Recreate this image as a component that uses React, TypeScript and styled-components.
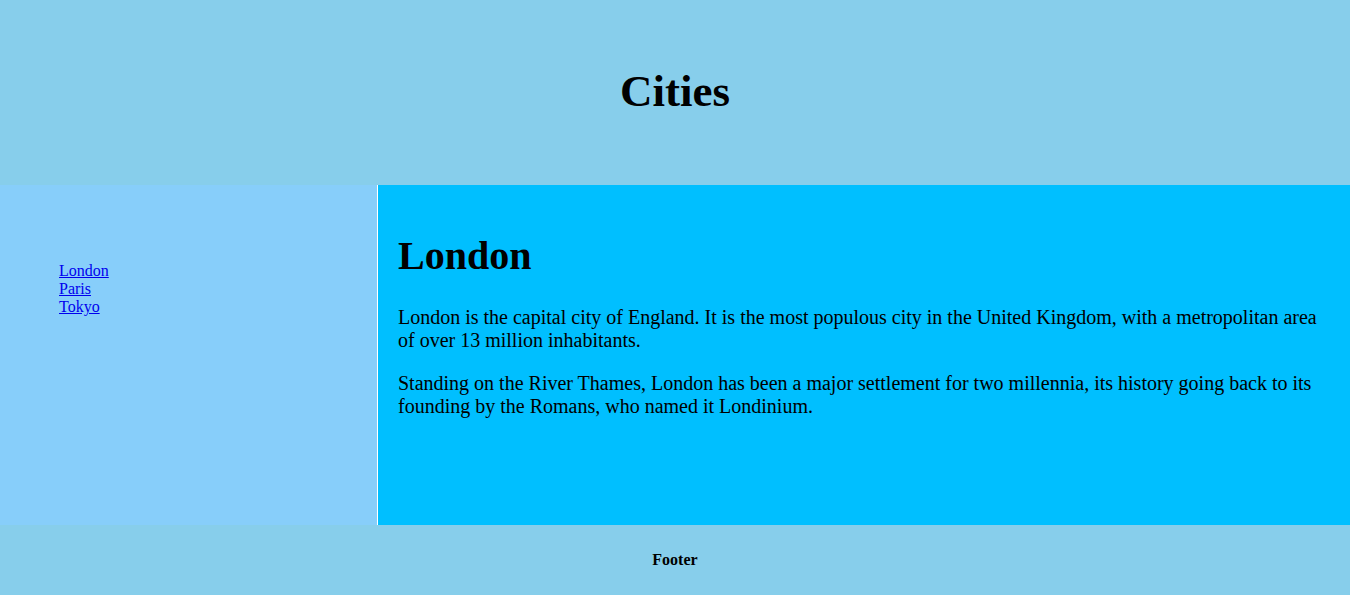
import React from "react";
import styled, { createGlobalStyle } from "styled-components";

const GlobalStyle = createGlobalStyle`
  html, body {
    margin: 0;
    padding: 0;
    background: #ffffff;
    font-family: "Liberation Serif", "Times New Roman", serif;
  }
  * { box-sizing: border-box; }
`;

const Page = styled.div`
  display: flex;
  flex-direction: column;
  width: 100%;
  height: 595px;
`;

const Header = styled.header`
  height: 185px;
  padding: 65px 0 0;
  background: #87ceeb;
  text-align: center;
`;

const Title = styled.h1`
  margin: 0;
  font-size: 45px;
  font-weight: bold;
  color: #000;
`;

const Section = styled.section`
  display: flex;
  gap: 1px;
  height: 340px;
`;

const Nav = styled.nav`
  flex: 0 0 377px;
  padding: 20px;
  background: #87cefa;
`;

const NavList = styled.ul`
  margin: 57px 0 0;
  padding-left: 39px;
  list-style: none;
  font-size: 16px;
`;

const NavLink = styled.a`
  color: #0000ee;
  text-decoration: underline;
`;

const Article = styled.article`
  flex: 1;
  padding: 20px;
  background: #00bfff;
  font-size: 20px;
  color: #000;
`;

const ArticleTitle = styled.h1`
  margin: 0.67em 0;
  font-size: 2em;
  font-weight: bold;
`;

const Paragraph = styled.p`
  margin: 1em 0;
`;

const Footer = styled.footer`
  height: 70px;
  padding: 10px;
  background: #87ceeb;
  text-align: center;
`;

const FooterText = styled.p`
  margin: 16px 0;
  font-size: 16px;
  font-weight: bold;
`;

const cities = ["London", "Paris", "Tokyo"];

export default function App() {
  return (
    <>
      <GlobalStyle />
      <Page>
        <Header>
          <Title>Cities</Title>
        </Header>
        <Section>
          <Nav>
            <NavList>
              {cities.map((c) => (
                <li key={c}>
                  <NavLink href="#">{c}</NavLink>
                </li>
              ))}
            </NavList>
          </Nav>
          <Article>
            <ArticleTitle>London</ArticleTitle>
            <Paragraph>
              London is the capital city of England. It is the most populous city in the United Kingdom, with a
              metropolitan area of over 13 million inhabitants.
            </Paragraph>
            <Paragraph>
              Standing on the River Thames, London has been a major settlement for two millennia, its history going
              back to its founding by the Romans, who named it Londinium.
            </Paragraph>
          </Article>
        </Section>
        <Footer>
          <FooterText>Footer</FooterText>
        </Footer>
      </Page>
    </>
  );
}
